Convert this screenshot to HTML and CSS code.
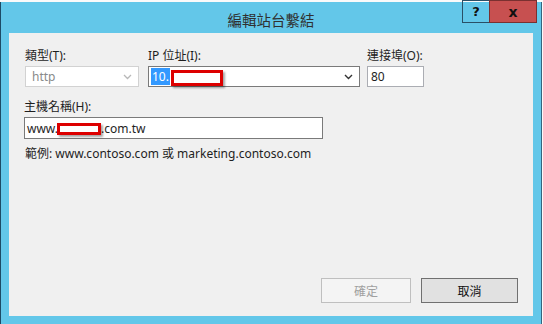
FILE: index.html
```html
<!DOCTYPE html>
<html lang="zh-Hant">
<head>
    <meta charset="UTF-8">
    <title>編輯站台繫結</title>
    <link rel="stylesheet" href="styles.css">
</head>
<body>
    <div class="window">
        <div class="titlebar">
            <span></span>
            <span class="title">編輯站台繫結</span>
            <div class="controls">
                <span class="btn-help">?</span>
                <span class="btn-close">x</span>
            </div>
        </div>

        <div class="content">
            <div class="row">
                <div class="col col-type">
                    <label>類型(T):</label>
                    <div class="field combo disabled">
                        <span>http</span>
                        <svg class="chev" width="9" height="6" viewBox="0 0 9 6"><path d="M1 1 L4.5 4.5 L8 1" fill="none" stroke="#b8b8b8" stroke-width="1.3"/></svg>
                    </div>
                </div>
                <div class="col col-ip">
                    <label>IP 位址(I):</label>
                    <div class="field combo dark">
                        <span class="value"><span class="sel">10.</span><span class="redact redact-ip"></span></span>
                        <svg class="chev" width="9" height="6" viewBox="0 0 9 6"><path d="M1 1 L4.5 4.5 L8 1" fill="none" stroke="#333" stroke-width="1.4"/></svg>
                    </div>
                </div>
                <div class="col col-port">
                    <label>連接埠(O):</label>
                    <div class="field">80</div>
                </div>
            </div>

            <div class="host">
                <label>主機名稱(H):</label>
                <div class="field host-field">www.<span class="redact redact-host"></span>.com.tw</div>
            </div>

            <p class="hint">範例: www.contoso.com 或 marketing.contoso.com</p>

            <div class="buttons">
                <button class="ok" disabled>確定</button>
                <button class="cancel">取消</button>
            </div>
        </div>
    </div>
</body>
</html>
```

FILE: styles.css
```css
body {
    margin: 0;
    background: #fafafa;
    font-family: "Noto Sans", "Noto Sans CJK TC", sans-serif;
    font-size: 12px;
    color: #1e1e1e;
}

.window {
    width: 540px;
    height: 322px;
    margin-top: 2px;
    background: #63c7e9;
    border-left: 1px solid #1d4b66;
    border-right: 1px solid #35667f;
    display: flex;
    flex-direction: column;
}

.titlebar {
    height: 31px;
    display: grid;
    grid-template-columns: 1fr auto 1fr;
}

.title {
    font-size: 14.5px;
    line-height: 36px;
    color: #303030;
}

.controls {
    justify-self: end;
    display: flex;
    height: 23px;
    margin-top: -2px;
    margin-right: 4px;
}

.btn-help,
.btn-close {
    font-family: "DejaVu Sans", sans-serif;
    font-weight: bold;
    font-size: 13px;
    text-align: center;
    line-height: 22px;
    color: #111;
    border: 1px solid #2a4f66;
}

.btn-help {
    width: 26px;
    border-right: none;
}

.btn-close {
    width: 46px;
    background: #c75050;
    border-color: #7a3030;
    font-size: 14px;
}

.content {
    flex: 1;
    margin: 0 8px 8px 8px;
    background: #f0f0f0;
    padding: 15px 15px 13px 15px;
    display: flex;
    flex-direction: column;
}

label {
    display: block;
    line-height: 16px;
    margin-bottom: 2px;
}

.row {
    display: flex;
    padding-left: 1px;
}

.col-type { width: 114px; margin-right: 9px; }
.col-ip { width: 212px; margin-right: 7px; }
.col-port { width: 57px; }

.field {
    height: 19px;
    border: 1px solid #abadb3;
    background: #fff;
    line-height: 19px;
    padding: 0 3px;
    display: flex;
    align-items: center;
    white-space: nowrap;
}

.combo {
    justify-content: space-between;
    padding-right: 6px;
}

.disabled {
    border-color: #d2d2d2;
    color: #8a8a8a;
    padding-left: 6px;
}

.dark {
    border-color: #7a7a7a;
    padding-left: 2px;
}

.value {
    display: flex;
    align-items: center;
}

.sel {
    background: #3399ff;
    color: #fff;
    padding: 0 1px;
    line-height: 17px;
}

.redact {
    display: inline-block;
    background: #fff;
    border: 3px solid #dd0000;
    box-sizing: border-box;
    box-shadow: 2px 2px 2px rgba(0, 0, 0, 0.35);
}

.redact-ip {
    width: 52px;
    height: 16px;
    margin-top: 3px;
    margin-left: 1px;
}

.host {
    margin-top: 12px;
}

.host-field {
    width: 292px;
    height: 20px;
    border-color: #7a7a7a;
    padding-left: 2px;
}

.redact-host {
    width: 44px;
    height: 12px;
    margin-top: 2px;
    margin-left: -1px;
}

.hint {
    margin: 7px 0 0 1px;
    line-height: 16px;
}

.buttons {
    margin-top: auto;
    display: flex;
    justify-content: flex-end;
    gap: 10px;
}

button {
    height: 25px;
    font-family: inherit;
    font-size: 12px;
    padding: 0;
}

.ok {
    width: 90px;
    background: #f4f4f4;
    border: 1px solid #bfbfbf;
    color: #a0a0a0;
}

.cancel {
    width: 97px;
    background: #e1e1e1;
    border: 1px solid #707070;
    color: #111;
}
```
